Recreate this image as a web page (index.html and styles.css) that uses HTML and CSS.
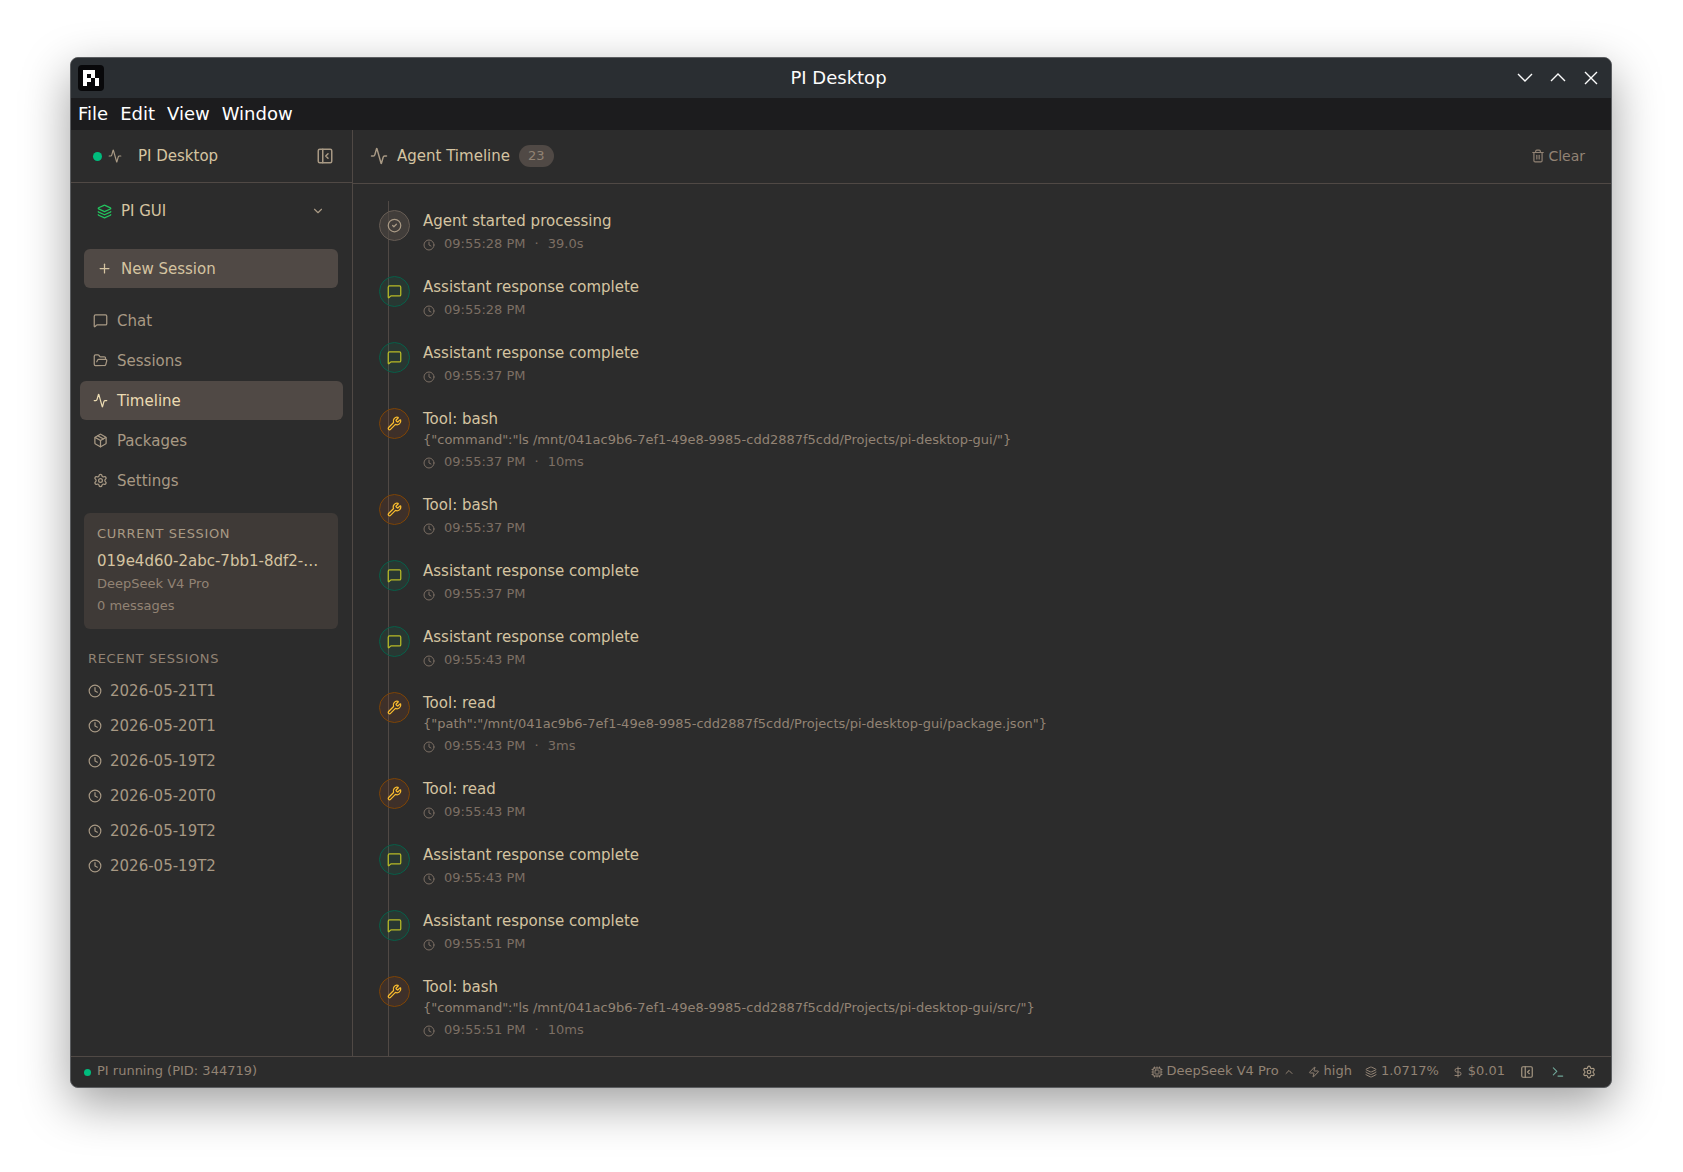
FILE: index.html
```html
<!DOCTYPE html>
<html lang="en">
<head>
  <meta charset="UTF-8">
  <meta name="viewport" content="width=device-width, initial-scale=1.0">
  <title>PI Desktop</title>
  <link rel="stylesheet" href="styles.css">
</head>
<body>

  <!-- Icon sprite -->
  <svg class="sprite" aria-hidden="true">
    <symbol id="i-activity" viewBox="0 0 24 24"><path d="M22 12h-2.48a2 2 0 0 0-1.93 1.46l-2.35 8.36a.25.25 0 0 1-.48 0L9.24 2.18a.25.25 0 0 0-.48 0l-2.35 8.36A2 2 0 0 1 4.49 12H2"/></symbol>
    <symbol id="i-panel" viewBox="0 0 24 24"><rect width="18" height="18" x="3" y="3" rx="2"/><path d="M9 3v18"/><path d="m16 15-3-3 3-3"/></symbol>
    <symbol id="i-layers" viewBox="0 0 24 24"><path d="M12.83 2.18a2 2 0 0 0-1.66 0L2.6 6.08a1 1 0 0 0 0 1.83l8.58 3.91a2 2 0 0 0 1.66 0l8.58-3.9a1 1 0 0 0 0-1.83z"/><path d="M2 12a1 1 0 0 0 .58.91l8.6 3.91a2 2 0 0 0 1.65 0l8.58-3.9A1 1 0 0 0 22 12"/><path d="M2 17a1 1 0 0 0 .58.91l8.6 3.91a2 2 0 0 0 1.65 0l8.58-3.9A1 1 0 0 0 22 17"/></symbol>
    <symbol id="i-down" viewBox="0 0 24 24"><path d="m6 9 6 6 6-6"/></symbol>
    <symbol id="i-up" viewBox="0 0 24 24"><path d="m18 15-6-6-6 6"/></symbol>
    <symbol id="i-plus" viewBox="0 0 24 24"><path d="M5 12h14"/><path d="M12 5v14"/></symbol>
    <symbol id="i-message" viewBox="0 0 24 24"><path d="M22 17a2 2 0 0 1-2 2H6.828a2 2 0 0 0-1.414.586l-2.202 2.202A.71.71 0 0 1 2 21.286V5a2 2 0 0 1 2-2h16a2 2 0 0 1 2 2z"/></symbol>
    <symbol id="i-folder" viewBox="0 0 24 24"><path d="m6 14 1.5-2.9A2 2 0 0 1 9.24 10H20a2 2 0 0 1 1.94 2.5l-1.54 6a2 2 0 0 1-1.95 1.5H4a2 2 0 0 1-2-2V5a2 2 0 0 1 2-2h3.9a2 2 0 0 1 1.69.9l.81 1.2a2 2 0 0 0 1.67.9H18a2 2 0 0 1 2 2v2"/></symbol>
    <symbol id="i-package" viewBox="0 0 24 24"><path d="M11 21.73a2 2 0 0 0 2 0l7-4A2 2 0 0 0 21 16V8a2 2 0 0 0-1-1.73l-7-4a2 2 0 0 0-2 0l-7 4A2 2 0 0 0 3 8v8a2 2 0 0 0 1 1.73z"/><path d="M12 22V12"/><path d="M3.29 7 12 12l8.71-5"/><path d="m7.5 4.27 9 5.15"/></symbol>
    <symbol id="i-settings" viewBox="0 0 24 24"><path d="M9.671 4.136a2.34 2.34 0 0 1 4.659 0 2.34 2.34 0 0 0 3.319 1.915 2.34 2.34 0 0 1 2.33 4.033 2.34 2.34 0 0 0 0 3.831 2.34 2.34 0 0 1-2.33 4.033 2.34 2.34 0 0 0-3.319 1.915 2.34 2.34 0 0 1-4.659 0 2.34 2.34 0 0 0-3.32-1.915 2.34 2.34 0 0 1-2.33-4.033 2.34 2.34 0 0 0 0-3.831A2.34 2.34 0 0 1 6.35 6.051a2.34 2.34 0 0 0 3.319-1.915"/><circle cx="12" cy="12" r="3"/></symbol>
    <symbol id="i-clock" viewBox="0 0 24 24"><circle cx="12" cy="12" r="10"/><path d="M12 6v6l4 2"/></symbol>
    <symbol id="i-check" viewBox="0 0 24 24"><circle cx="12" cy="12" r="10"/><path d="m9 12 2 2 4-4"/></symbol>
    <symbol id="i-wrench" viewBox="0 0 24 24"><path d="M14.7 6.3a1 1 0 0 0 0 1.4l1.6 1.6a1 1 0 0 0 1.4 0l3.106-3.105c.32-.322.863-.22.983.218a6 6 0 0 1-8.259 7.057l-7.91 7.91a1 1 0 0 1-2.999-3l7.91-7.91a6 6 0 0 1 7.057-8.259c.438.12.54.662.219.984z"/></symbol>
    <symbol id="i-trash" viewBox="0 0 24 24"><path d="M10 11v6"/><path d="M14 11v6"/><path d="M19 6v14a2 2 0 0 1-2 2H7a2 2 0 0 1-2-2V6"/><path d="M3 6h18"/><path d="M8 6V4a2 2 0 0 1 2-2h4a2 2 0 0 1 2 2v2"/></symbol>
    <symbol id="i-cpu" viewBox="0 0 24 24"><path d="M12 20v2M12 2v2M17 20v2M17 2v2M2 12h2M2 17h2M2 7h2M20 12h2M20 17h2M20 7h2M7 20v2M7 2v2"/><rect x="4" y="4" width="16" height="16" rx="2"/><rect x="8" y="8" width="8" height="8" rx="1"/></symbol>
    <symbol id="i-zap" viewBox="0 0 24 24"><path d="M4 14a1 1 0 0 1-.78-1.63l9.9-10.2a.5.5 0 0 1 .86.46l-1.92 6.02A1 1 0 0 0 13 10h7a1 1 0 0 1 .78 1.63l-9.9 10.2a.5.5 0 0 1-.86-.46l1.92-6.02A1 1 0 0 0 11 14z"/></symbol>
    <symbol id="i-dollar" viewBox="0 0 24 24"><path d="M12 2v20"/><path d="M17 5H9.5a3.5 3.5 0 0 0 0 7h5a3.5 3.5 0 0 1 0 7H6"/></symbol>
    <symbol id="i-terminal" viewBox="0 0 24 24"><path d="M12 19h8"/><path d="m4 17 6-6-6-6"/></symbol>
  </svg>

  <div class="window">

    <header class="titlebar">
      <svg class="logo" viewBox="0 0 26 26" aria-hidden="true">
        <rect width="26" height="26" rx="4" fill="#08080a"/>
        <path fill="#fff" fill-rule="evenodd" d="M5 5h12v8h-4v4h-4v4H5zM9 9v4h4V9zM17 13h4v8h-4z"/>
      </svg>
      <h1>PI Desktop</h1>
      <div class="window-controls">
        <button aria-label="Minimize"><svg viewBox="0 0 16 16"><path d="m1 4 7 7 7-7"/></svg></button>
        <button aria-label="Maximize"><svg viewBox="0 0 16 16"><path d="m1 11 7-7 7 7"/></svg></button>
        <button aria-label="Close"><svg viewBox="0 0 16 16"><path d="m2 2 12 12M14 2 2 14"/></svg></button>
      </div>
    </header>

    <nav class="menubar">
      <button>File</button>
      <button>Edit</button>
      <button>View</button>
      <button>Window</button>
    </nav>

    <div class="app">

      <aside class="sidebar">
        <div class="sidebar-header">
          <span class="dot"></span>
          <svg class="icon icon-sm"><use href="#i-activity"/></svg>
          <span class="app-name">PI Desktop</span>
          <button class="icon-button" aria-label="Collapse sidebar"><svg class="icon icon-lg"><use href="#i-panel"/></svg></button>
        </div>

        <button class="project">
          <svg class="icon layers"><use href="#i-layers"/></svg>
          <span>PI GUI</span>
          <svg class="icon icon-sm chevron"><use href="#i-down"/></svg>
        </button>

        <button class="new-session"><svg class="icon"><use href="#i-plus"/></svg>New Session</button>

        <nav class="nav">
          <a href="#chat"><svg class="icon"><use href="#i-message"/></svg>Chat</a>
          <a href="#sessions"><svg class="icon"><use href="#i-folder"/></svg>Sessions</a>
          <a href="#timeline" class="active"><svg class="icon"><use href="#i-activity"/></svg>Timeline</a>
          <a href="#packages"><svg class="icon"><use href="#i-package"/></svg>Packages</a>
          <a href="#settings"><svg class="icon"><use href="#i-settings"/></svg>Settings</a>
        </nav>

        <section class="current">
          <h2>CURRENT SESSION</h2>
          <p class="session-id">019e4d60-2abc-7bb1-8df2-…</p>
          <p>DeepSeek V4 Pro</p>
          <p>0 messages</p>
        </section>

        <section class="recent">
          <h2>RECENT SESSIONS</h2>
          <a href="#s1"><svg class="icon icon-sm"><use href="#i-clock"/></svg>2026-05-21T1</a>
          <a href="#s2"><svg class="icon icon-sm"><use href="#i-clock"/></svg>2026-05-20T1</a>
          <a href="#s3"><svg class="icon icon-sm"><use href="#i-clock"/></svg>2026-05-19T2</a>
          <a href="#s4"><svg class="icon icon-sm"><use href="#i-clock"/></svg>2026-05-20T0</a>
          <a href="#s5"><svg class="icon icon-sm"><use href="#i-clock"/></svg>2026-05-19T2</a>
          <a href="#s6"><svg class="icon icon-sm"><use href="#i-clock"/></svg>2026-05-19T2</a>
        </section>
      </aside>

      <main class="main">
        <div class="main-header">
          <svg class="icon icon-lg"><use href="#i-activity"/></svg>
          <h2>Agent Timeline</h2>
          <span class="badge">23</span>
          <button class="clear"><svg class="icon icon-sm"><use href="#i-trash"/></svg>Clear</button>
        </div>

        <div class="scroll">
          <ol class="timeline">
            <li class="event">
              <span class="marker"><svg class="icon"><use href="#i-check"/></svg></span>
              <div>
                <h3>Agent started processing</h3>
                <div class="meta"><svg class="icon icon-xs"><use href="#i-clock"/></svg><span>09:55:28 PM</span><span>·</span><span>39.0s</span></div>
              </div>
            </li>
            <li class="event">
              <span class="marker reply"><svg class="icon"><use href="#i-message"/></svg></span>
              <div>
                <h3>Assistant response complete</h3>
                <div class="meta"><svg class="icon icon-xs"><use href="#i-clock"/></svg><span>09:55:28 PM</span></div>
              </div>
            </li>
            <li class="event">
              <span class="marker reply"><svg class="icon"><use href="#i-message"/></svg></span>
              <div>
                <h3>Assistant response complete</h3>
                <div class="meta"><svg class="icon icon-xs"><use href="#i-clock"/></svg><span>09:55:37 PM</span></div>
              </div>
            </li>
            <li class="event">
              <span class="marker tool"><svg class="icon"><use href="#i-wrench"/></svg></span>
              <div>
                <h3>Tool: bash</h3>
                <p>{"command":"ls /mnt/041ac9b6-7ef1-49e8-9985-cdd2887f5cdd/Projects/pi-desktop-gui/"}</p>
                <div class="meta"><svg class="icon icon-xs"><use href="#i-clock"/></svg><span>09:55:37 PM</span><span>·</span><span>10ms</span></div>
              </div>
            </li>
            <li class="event">
              <span class="marker tool"><svg class="icon"><use href="#i-wrench"/></svg></span>
              <div>
                <h3>Tool: bash</h3>
                <div class="meta"><svg class="icon icon-xs"><use href="#i-clock"/></svg><span>09:55:37 PM</span></div>
              </div>
            </li>
            <li class="event">
              <span class="marker reply"><svg class="icon"><use href="#i-message"/></svg></span>
              <div>
                <h3>Assistant response complete</h3>
                <div class="meta"><svg class="icon icon-xs"><use href="#i-clock"/></svg><span>09:55:37 PM</span></div>
              </div>
            </li>
            <li class="event">
              <span class="marker reply"><svg class="icon"><use href="#i-message"/></svg></span>
              <div>
                <h3>Assistant response complete</h3>
                <div class="meta"><svg class="icon icon-xs"><use href="#i-clock"/></svg><span>09:55:43 PM</span></div>
              </div>
            </li>
            <li class="event">
              <span class="marker tool"><svg class="icon"><use href="#i-wrench"/></svg></span>
              <div>
                <h3>Tool: read</h3>
                <p>{"path":"/mnt/041ac9b6-7ef1-49e8-9985-cdd2887f5cdd/Projects/pi-desktop-gui/package.json"}</p>
                <div class="meta"><svg class="icon icon-xs"><use href="#i-clock"/></svg><span>09:55:43 PM</span><span>·</span><span>3ms</span></div>
              </div>
            </li>
            <li class="event">
              <span class="marker tool"><svg class="icon"><use href="#i-wrench"/></svg></span>
              <div>
                <h3>Tool: read</h3>
                <div class="meta"><svg class="icon icon-xs"><use href="#i-clock"/></svg><span>09:55:43 PM</span></div>
              </div>
            </li>
            <li class="event">
              <span class="marker reply"><svg class="icon"><use href="#i-message"/></svg></span>
              <div>
                <h3>Assistant response complete</h3>
                <div class="meta"><svg class="icon icon-xs"><use href="#i-clock"/></svg><span>09:55:43 PM</span></div>
              </div>
            </li>
            <li class="event">
              <span class="marker reply"><svg class="icon"><use href="#i-message"/></svg></span>
              <div>
                <h3>Assistant response complete</h3>
                <div class="meta"><svg class="icon icon-xs"><use href="#i-clock"/></svg><span>09:55:51 PM</span></div>
              </div>
            </li>
            <li class="event">
              <span class="marker tool"><svg class="icon"><use href="#i-wrench"/></svg></span>
              <div>
                <h3>Tool: bash</h3>
                <p>{"command":"ls /mnt/041ac9b6-7ef1-49e8-9985-cdd2887f5cdd/Projects/pi-desktop-gui/src/"}</p>
                <div class="meta"><svg class="icon icon-xs"><use href="#i-clock"/></svg><span>09:55:51 PM</span><span>·</span><span>10ms</span></div>
              </div>
            </li>
          </ol>
        </div>
      </main>

    </div>

    <footer class="statusbar">
      <span class="dot dot-sm"></span>
      <span class="status-text">PI running (PID: 344719)</span>
      <button><svg class="icon icon-xs"><use href="#i-cpu"/></svg>DeepSeek V4 Pro<svg class="icon icon-xs"><use href="#i-up"/></svg></button>
      <button><svg class="icon icon-xs"><use href="#i-zap"/></svg>high</button>
      <span class="stat"><svg class="icon icon-xs"><use href="#i-layers"/></svg>1.0717%</span>
      <span class="stat"><svg class="icon icon-xs"><use href="#i-dollar"/></svg>$0.01</span>
      <div class="status-actions">
        <button aria-label="Toggle sidebar"><svg class="icon icon-sm"><use href="#i-panel"/></svg></button>
        <button class="terminal" aria-label="Terminal"><svg class="icon icon-sm"><use href="#i-terminal"/></svg></button>
        <button aria-label="Settings"><svg class="icon icon-sm"><use href="#i-settings"/></svg></button>
      </div>
    </footer>

  </div>

</body>
</html>
```
FILE: styles.css
```css
* {
  box-sizing: border-box;
}

body {
  margin: 0;
  height: 100vh;
  padding: 57px 71px 84px 70px;
  background: #fff;
  color: #d5c4a1;
  font-family: "DejaVu Sans", sans-serif;
  font-size: 15px;
  line-height: 22px;
  display: flex;
}

h1, h2, h3, p, ol {
  margin: 0;
  padding: 0;
  font-size: inherit;
  font-weight: normal;
}

button {
  padding: 0;
  border: none;
  background: none;
  color: inherit;
  font: inherit;
  cursor: pointer;
  display: flex;
  align-items: center;
}

a {
  color: inherit;
  text-decoration: none;
}

.sprite {
  display: none;
}

.icon {
  width: 15px;
  height: 15px;
  flex-shrink: 0;
  fill: none;
  stroke: currentColor;
  stroke-width: 2;
  stroke-linecap: round;
  stroke-linejoin: round;
}

.icon-xs {
  width: 12px;
  height: 12px;
}

.icon-sm {
  width: 14px;
  height: 14px;
}

.icon-lg {
  width: 18px;
  height: 18px;
}

.window {
  flex: 1;
  min-width: 0;
  border: 1px solid #5b5d60;
  border-radius: 8px;
  background: #2c2c2c;
  box-shadow: 0 16px 48px rgba(0, 0, 0, 0.38);
  overflow: hidden;
  display: flex;
  flex-direction: column;
}

/* Title bar */
.titlebar {
  height: 40px;
  padding: 0 12px 0 7px;
  background: #2a2e32;
  color: #fcfcfc;
  font-size: 18px;
  display: grid;
  grid-template-columns: 1fr auto 1fr;
  align-items: center;
}

.logo {
  width: 26px;
  height: 26px;
}

.window-controls {
  display: flex;
  justify-content: flex-end;
  gap: 17px;
}

.window-controls svg {
  width: 16px;
  height: 16px;
  fill: none;
  stroke: #fcfcfc;
  stroke-width: 1.4;
}

.menubar {
  height: 32px;
  padding: 0 7px;
  background: #1c1c1e;
  color: #fff;
  font-size: 18px;
  display: flex;
  gap: 12px;
}

.app {
  flex: 1;
  min-height: 0;
  display: flex;
}

/* Sidebar */
.sidebar {
  width: 282px;
  flex-shrink: 0;
  border-right: 1px solid #504945;
  overflow: hidden;
}

.dot {
  width: 9px;
  height: 9px;
  border-radius: 50%;
  background: #00bc7d;
}

.dot-sm {
  width: 7px;
  height: 7px;
}

.sidebar-header {
  height: 53px;
  padding: 0 18px 0 22px;
  border-bottom: 1px solid #504945;
  color: #a89984;
  display: flex;
  align-items: center;
  gap: 6px;
}

.app-name {
  flex: 1;
  margin-left: 10px;
  color: #d5c4a1;
}

.project {
  width: calc(100% - 27px);
  height: 40px;
  margin: 8px 14px 18px 13px;
  padding: 0 13px;
  gap: 9px;
}

.layers {
  color: #22c55e;
}

.chevron {
  margin-left: auto;
  color: #a89984;
}

.new-session {
  width: calc(100% - 27px);
  height: 39px;
  margin: 0 14px 0 13px;
  padding: 0 13px;
  gap: 9px;
  border-radius: 6px;
  background: #504945;
}

.nav {
  margin: 13px 9px;
  color: #a89984;
  display: flex;
  flex-direction: column;
  gap: 1px;
}

.nav a {
  height: 39px;
  padding: 0 13px;
  border-radius: 6px;
  display: flex;
  align-items: center;
  gap: 9px;
}

.nav .active {
  background: #504945;
  color: #ebdbb2;
}

.current {
  margin: 0 14px 0 13px;
  padding: 11px 13px 12px;
  border-radius: 6px;
  background: #3f3a37;
  color: #928374;
  font-size: 13px;
}

.current h2,
.recent h2 {
  font-size: 13px;
  line-height: 20px;
  letter-spacing: 0.05em;
}

.current h2 {
  margin-bottom: 5px;
  color: #a89984;
}

.current .session-id {
  color: #d5c4a1;
  font-size: 15px;
  line-height: 24px;
  white-space: nowrap;
}

.recent {
  padding: 20px 17px;
  color: #a89984;
}

.recent h2 {
  margin-bottom: 4px;
  color: #928374;
}

.recent a {
  height: 35px;
  display: flex;
  align-items: center;
  gap: 8px;
}

/* Timeline */
.main {
  flex: 1;
  min-width: 0;
  display: flex;
  flex-direction: column;
}

.main-header {
  height: 54px;
  padding: 0 26px 2px 17px;
  border-bottom: 1px solid #504945;
  display: flex;
  align-items: center;
  gap: 9px;
}

.main-header > .icon {
  color: #a89984;
}

.badge {
  padding: 0 9px;
  border-radius: 11px;
  background: #504945;
  color: #928374;
  font-size: 13px;
}

.clear {
  margin-left: auto;
  gap: 3px;
  color: #928374;
  font-size: 14px;
}

.scroll {
  flex: 1;
  min-height: 0;
  padding: 17px 26px 0;
  overflow: hidden;
}

.timeline {
  position: relative;
  padding-top: 9px;
  list-style: none;
}

/* Vertical line behind the markers */
.timeline::before {
  content: "";
  position: absolute;
  top: 0;
  bottom: 0;
  left: 9px;
  width: 1px;
  background: #504945;
}

.event {
  padding-bottom: 22px;
  display: flex;
  gap: 13px;
}

.marker {
  position: relative;
  width: 31px;
  height: 31px;
  flex-shrink: 0;
  border: 1px solid #665c54;
  border-radius: 50%;
  background: rgba(80, 73, 69, 0.6);
  color: #a89984;
  display: flex;
  align-items: center;
  justify-content: center;
}

.marker.reply {
  border-color: #075f49;
  background: rgba(0, 188, 125, 0.08);
  color: #b8bb26;
}

.marker.tool {
  border-color: #7d4406;
  background: rgba(225, 90, 20, 0.1);
  color: #fabd2f;
}

.event p {
  color: #928374;
  font-size: 13px;
  line-height: 20px;
}

.meta {
  margin-top: 2px;
  color: #7c6f64;
  font-size: 13px;
  line-height: 20px;
  display: flex;
  align-items: center;
  gap: 9px;
}

.meta .icon {
  margin-top: 2px;
}

/* Status bar */
.statusbar {
  height: 31px;
  padding: 0 15px 2px 13px;
  border-top: 1px solid #504945;
  color: #928374;
  font-size: 13px;
  display: flex;
  align-items: center;
  gap: 13px;
}

.statusbar .icon,
.dot-sm {
  margin-top: 2px;
}

.status-text {
  flex: 1;
  margin-left: -7px;
}

.statusbar button,
.stat {
  display: flex;
  align-items: center;
  gap: 4px;
}

.status-actions {
  display: flex;
  gap: 17px;
  margin-left: 2px;
  color: #a89984;
}

.statusbar .status-actions .terminal {
  color: #6fa597;
}
```
